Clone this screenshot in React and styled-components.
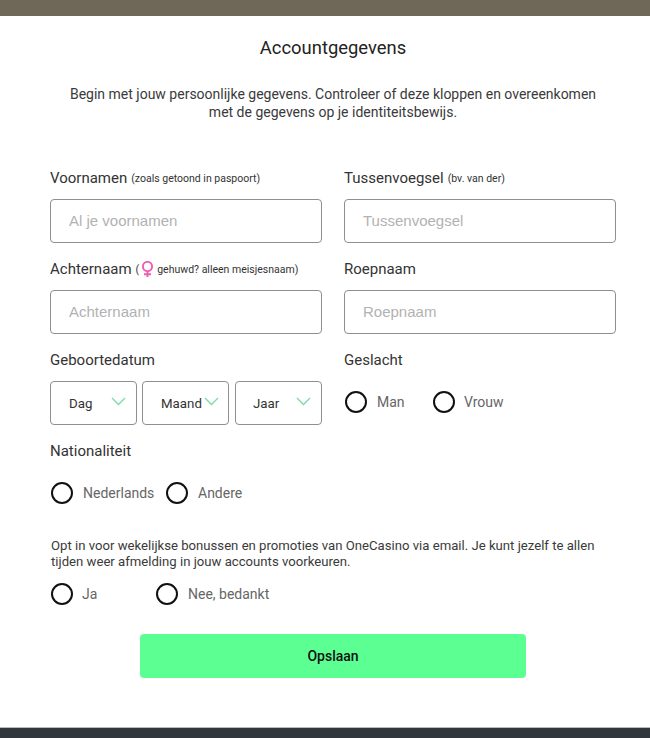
import styled, { createGlobalStyle } from 'styled-components';

const GlobalStyle = createGlobalStyle`
  html, body { margin: 0; padding: 0; background: #fff; }
  body { font-family: Roboto, "Liberation Sans", sans-serif; color: #222; }
`;

const Page = styled.div`
  width: 650px;
  height: 738px;
  display: flex;
  flex-direction: column;
  overflow: hidden;
`;

const TopBar = styled.div`
  height: 16px;
  flex: none;
  background: #6f6858;
`;

const Main = styled.main`
  flex: 1;
  padding: 0 34px 0 50px;
`;

const Title = styled.h1`
  margin: 21px 0 0;
  font-size: 18.4px;
  line-height: 22px;
  font-weight: 400;
  text-align: center;
  color: #222;
`;

const Intro = styled.p`
  margin: 26px 0 0;
  font-size: 14px;
  line-height: 18px;
  font-weight: 400;
  text-align: center;
  color: #3a3a3a;
`;

const Columns = styled.div`
  display: grid;
  grid-template-columns: 272px 272px;
  column-gap: 22px;
  grid-auto-rows: 91px;
  margin-top: 47px;
`;

const Label = styled.label`
  display: flex;
  align-items: center;
  height: 20px;
  font-size: 15px;
  font-weight: 400;
  color: #333;
`;

const Hint = styled.small`
  font-size: 10.5px;
  margin-left: ${(p) => (p.$flush ? 0 : 4)}px;
  font-weight: 400;
  color: #333;
`;

const TextInput = styled.input`
  display: block;
  box-sizing: border-box;
  width: 272px;
  height: 44px;
  margin-top: 11px;
  padding: 0 18px 2px;
  border: 1px solid #8f8f8f;
  border-radius: 4px;
  background: #fff;
  font-family: "Liberation Sans", Arial, sans-serif;
  font-size: 15px;
  &::placeholder { color: #b2b2b2; opacity: 1; }
`;

const Selects = styled.div`
  display: grid;
  grid-template-columns: 92px 93px 87px;
  margin-top: 11px;
`;

const Select = styled.div`
  box-sizing: border-box;
  width: 87px;
  height: 44px;
  display: flex;
  align-items: center;
  position: relative;
  padding-left: ${(p) => p.$pad}px;
  border: 1px solid #8f8f8f;
  border-radius: 4px;
  font-size: 13.3px;
  font-weight: 400;
  color: #333;
  svg {
    position: absolute;
    top: 15px;
    left: ${(p) => p.$arrow}px;
  }
`;

const RadioRow = styled.div`
  display: flex;
  align-items: center;
  height: 24px;
  margin-top: ${(p) => p.$top}px;
  margin-left: 1px;
`;

const Radio = styled.label`
  display: flex;
  align-items: center;
  width: ${(p) => p.$width}px;
  flex: none;
  font-size: 14px;
  font-weight: 400;
  color: #666;
`;

const Circle = styled.span`
  box-sizing: border-box;
  width: 22px;
  height: 22px;
  flex: none;
  margin-right: ${(p) => p.$gap}px;
  border: 2px solid #111;
  border-radius: 50%;
`;

const OptIn = styled.p`
  margin: 33px 0 0 1px;
  width: 560px;
  font-size: 13.15px;
  line-height: 16px;
  font-weight: 400;
  color: #3a3a3a;
`;

const SaveButton = styled.button`
  display: block;
  width: 386px;
  height: 44px;
  margin: 28px 0 0 90px;
  border: 0;
  border-radius: 4px;
  background: #5cff92;
  font-family: inherit;
  font-size: 14px;
  font-weight: 500;
  color: #111;
`;

const Footer = styled.footer`
  height: 10px;
  flex: none;
  background: #32363d;
  border-top: 1px solid #b9babc;
`;

const FemaleSign = styled.svg`
  flex: none;
  margin: 0 3px 0 2px;
`;

const Chevron = () => (
  <svg width="15" height="9" viewBox="0 0 15 9" fill="none" stroke="#79dca6" strokeWidth="1.3">
    <path d="M1 1l6.5 6.5L14 1" />
  </svg>
);

const FemaleIcon = () => (
  <FemaleSign width="13" height="16" viewBox="0 0 13 16" fill="none" stroke="#f05cb0" strokeWidth="1.9">
    <circle cx="6.5" cy="5.5" r="4.6" />
    <path d="M6.5 10.1V16M3 13.2h7" />
  </FemaleSign>
);

export default function App() {
  return (
    <Page>
      <GlobalStyle />
      <TopBar />
      <Main>
        <Title>Accountgegevens</Title>
        <Intro>
          Begin met jouw persoonlijke gegevens. Controleer of deze kloppen en overeenkomen
          <br />
          met de gegevens op je identiteitsbewijs.
        </Intro>
        <Columns>
          <div>
            <Label>Voornamen<Hint>(zoals getoond in paspoort)</Hint></Label>
            <TextInput placeholder="Al je voornamen" />
          </div>
          <div>
            <Label>Tussenvoegsel<Hint>(bv. van der)</Hint></Label>
            <TextInput placeholder="Tussenvoegsel" />
          </div>
          <div>
            <Label>Achternaam<Hint>(</Hint><FemaleIcon /><Hint $flush>gehuwd? alleen meisjesnaam)</Hint></Label>
            <TextInput placeholder="Achternaam" />
          </div>
          <div>
            <Label>Roepnaam</Label>
            <TextInput placeholder="Roepnaam" />
          </div>
          <div>
            <Label>Geboortedatum</Label>
            <Selects>
              <Select $pad={18} $arrow={60}>Dag<Chevron /></Select>
              <Select $pad={18} $arrow={61}>Maand<Chevron /></Select>
              <Select $pad={17} $arrow={60}>Jaar<Chevron /></Select>
            </Selects>
          </div>
          <div>
            <Label>Geslacht</Label>
            <RadioRow $top={20}>
              <Radio $width={88}><Circle $gap={10} />Man</Radio>
              <Radio $width={90}><Circle $gap={9} />Vrouw</Radio>
            </RadioRow>
          </div>
        </Columns>
        <Label>Nationaliteit</Label>
        <RadioRow $top={20}>
          <Radio $width={115}><Circle $gap={10} />Nederlands</Radio>
          <Radio $width={90}><Circle $gap={10} />Andere</Radio>
        </RadioRow>
        <OptIn>
          Opt in voor wekelijkse bonussen en promoties van OneCasino via email. Je kunt jezelf te allen
          tijden weer afmelding in jouw accounts voorkeuren.
        </OptIn>
        <RadioRow $top={12}>
          <Radio $width={105}><Circle $gap={9} />Ja</Radio>
          <Radio $width={140}><Circle $gap={10} />Nee, bedankt</Radio>
        </RadioRow>
        <SaveButton>Opslaan</SaveButton>
      </Main>
      <Footer />
    </Page>
  );
}
